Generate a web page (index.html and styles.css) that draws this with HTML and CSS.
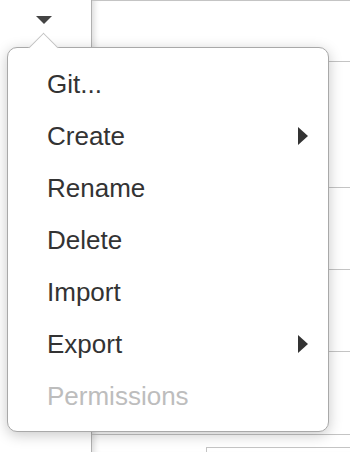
FILE: index.html
```html
<!DOCTYPE html>
<html lang="en">
<head>
    <meta charset="UTF-8">
    <title>Project menu</title>
    <link rel="stylesheet" href="styles.css">
</head>
<body>
    <div class="app">
        <div class="sidebar">
            <span class="caret"></span>
        </div>
        <div class="main">
            <div class="row row-a"></div>
            <div class="row row-b"></div>
            <div class="row row-c"></div>
            <div class="row row-c"></div>
            <div class="row row-d"></div>
            <div class="field"></div>
        </div>
    </div>

    <ul class="menu">
        <li class="menu-item">Git...</li>
        <li class="menu-item has-sub">Create <span class="sub-arrow"></span></li>
        <li class="menu-item">Rename</li>
        <li class="menu-item">Delete</li>
        <li class="menu-item">Import</li>
        <li class="menu-item has-sub">Export <span class="sub-arrow"></span></li>
        <li class="menu-item disabled">Permissions</li>
    </ul>
</body>
</html>
```

FILE: styles.css
```css
body {
    margin: 0;
    font-family: 'Liberation Sans', Arial, sans-serif;
    background-color: #ffffff;
    overflow: hidden;
}
.app {
    display: flex;
    height: 452px;
}
.sidebar {
    width: 92px;
    border-right: 1px solid #b0b0b0;
    padding: 16px 0 0 36px;
    box-sizing: border-box;
}
.caret {
    display: block;
    width: 0;
    height: 0;
    border-left: 8px solid transparent;
    border-right: 8px solid transparent;
    border-top: 8px solid #444444;
}
.main {
    flex: 1;
    border-top: 1px solid #c4c4c4;
    box-shadow: inset 7px 0 6px -5px rgba(0, 0, 0, 0.16);
}
.row {
    border-bottom: 1px solid #c4c4c4;
}
.row-a {
    height: 60px;
}
.row-b {
    height: 125px;
}
.row-c {
    height: 81px;
}
.row-d {
    height: 82px;
}
.field {
    margin: 12px 0 0 114px;
    height: 20px;
    border-top: 1px solid #c4c4c4;
    border-left: 1px solid #c4c4c4;
}
.menu {
    position: absolute;
    left: 7px;
    top: 47px;
    width: 322px;
    height: 385px;
    box-sizing: border-box;
    margin: 0;
    padding: 10px 0 0 0;
    list-style: none;
    background-color: #ffffff;
    border: 1px solid #a9a9a9;
    border-radius: 10px;
    box-shadow: 0 3px 14px rgba(0, 0, 0, 0.22);
}
.menu:before {
    content: "";
    position: absolute;
    left: 25px;
    top: -11px;
    width: 21px;
    height: 21px;
    box-sizing: border-box;
    background-color: #ffffff;
    border-top: 1px solid #c2c2c2;
    border-left: 1px solid #c2c2c2;
    transform: rotate(45deg);
}
.menu-item {
    display: flex;
    align-items: center;
    justify-content: space-between;
    height: 52px;
    line-height: 52px;
    padding: 0 20px 0 39px;
    font-size: 26px;
    color: #333333;
}
.menu-item.disabled {
    color: #bdbdbd;
}
.sub-arrow {
    width: 0;
    height: 0;
    border-top: 9px solid transparent;
    border-bottom: 9px solid transparent;
    border-left: 10px solid #333333;
}
```
